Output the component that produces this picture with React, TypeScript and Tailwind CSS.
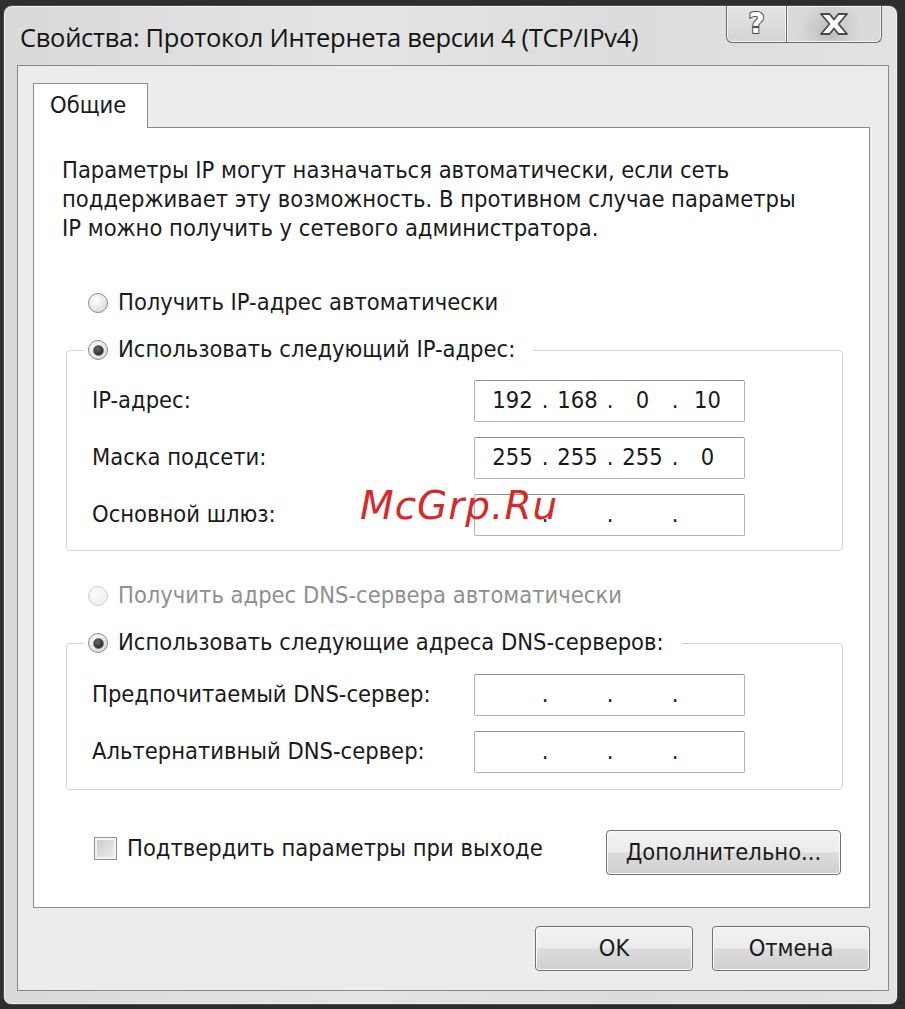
import React from "react"

const body = "font-['DejaVu_Sans_Condensed','DejaVu_Sans',sans-serif] text-[23.5px] text-[#1a1a1a]"

function Radio({ checked, disabled }: { checked?: boolean; disabled?: boolean }) {
  return (
    <span
      className={`flex size-[20px] shrink-0 items-center justify-center rounded-full border ${
        disabled
          ? "border-[#cdcdcd] bg-[radial-gradient(circle_at_40%_35%,#fbfbfb,#ececec)]"
          : "border-[#8b8b8b] bg-[radial-gradient(circle_at_40%_35%,#ffffff,#d2d2d2)]"
      }`}
    >
      {checked && (
        <span className="size-[11px] rounded-full border border-[#6a6a6a] bg-[radial-gradient(circle_at_40%_35%,#6b6b6b,#141414)]" />
      )}
    </span>
  )
}

function IpBox({ parts }: { parts: string[] }) {
  return (
    <div className="flex h-[42px] w-[271px] shrink-0 items-center rounded-[2px] border border-[#b3b3b3] border-t-[#8f8f8f] bg-white pl-[10px]">
      {parts.map((p, i) => (
        <React.Fragment key={i}>
          <span className="w-[55px] text-center">{p}</span>
          {i < 3 && <span className="w-[10px] text-center">.</span>}
        </React.Fragment>
      ))}
    </div>
  )
}

function Row({ label, parts }: { label: string; parts: string[] }) {
  return (
    <div className="flex h-[42px] items-center justify-between">
      <span>{label}</span>
      <IpBox parts={parts} />
    </div>
  )
}

function Group({ legend, children, top }: { legend: string; children: React.ReactNode; top: string }) {
  return (
    <fieldset className="ml-[4px] rounded-[4px] border border-[#d4d4d4]">
      <legend className="ml-[17px] flex h-[30px] items-center gap-[10px] pl-[4px] pr-[18px]">
        <Radio checked />
        <span>{legend}</span>
      </legend>
      <div className={`flex flex-col gap-[15px] pl-[25px] pr-[97px] ${top}`}>{children}</div>
    </fieldset>
  )
}

function Button({ children, className }: { children: React.ReactNode; className: string }) {
  return (
    <div
      className={`flex h-[45px] items-center justify-center rounded-[4px] border border-[#707070] bg-[linear-gradient(#f3f3f3_0%,#ebebeb_48%,#dcdcdc_52%,#cfcfcf_100%)] shadow-[inset_0_0_0_1px_#fbfbfb] ${className}`}
    >
      {children}
    </div>
  )
}

export default function App() {
  return (
    <div className="relative h-[1009px] w-[905px] overflow-hidden bg-[#2e2e2e] pl-[3px] pr-[7px] pt-[5px]">
      <div className="flex h-[1000px] flex-col rounded-t-[9px] rounded-b-[8px] border border-[#4a4a4a] bg-[linear-gradient(90deg,#d9d9d9,#e4e4e4_40%,#dcdcdc_70%,#e2e2e2)] shadow-[inset_0_0_0_1px_#f2f2f2]">
        <div className="flex h-[59px] shrink-0 items-start justify-between pl-[16px] pr-[15px]">
          <span className="mt-[12px] font-['Open_Sans',sans-serif] text-[25.5px] tracking-[-0.3px] text-[#141414]">
            Свойства: Протокол Интернета версии 4 (TCP/IPv4)
          </span>
          <div className="flex h-[37px]">
            <div className="flex w-[61px] items-center justify-center rounded-bl-[6px] border border-t-0 border-[#6a6a6a] bg-[linear-gradient(#e6e6e6,#d4d4d4)] shadow-[inset_0_0_0_1px_#f4f4f4]">
              <span className="font-['DejaVu_Sans',sans-serif] text-[28px] font-bold leading-none text-white [-webkit-text-stroke:2px_#4a4a4a] [paint-order:stroke_fill]">
                ?
              </span>
            </div>
            <div className="flex w-[95px] items-center justify-center rounded-br-[6px] border border-l-0 border-t-0 border-[#6a6a6a] bg-[radial-gradient(circle_at_45%_70%,#bdbdbd,#dadada_55%)] shadow-[inset_0_0_0_1px_#f4f4f4]">
              <svg width="30" height="24" viewBox="0 0 30 24">
                <path
                  d="M2 2h8.5l4.5 5.5 4.5-5.5h8.5l-8.5 10 8.5 10h-8.5l-4.5-5.5-4.5 5.5H2l8.5-10z"
                  fill="#ffffff"
                  stroke="#4a4a4a"
                  strokeWidth="1.8"
                  strokeLinejoin="round"
                />
              </svg>
            </div>
          </div>
        </div>

        <div className={`ml-[13px] mr-[8px] flex h-[926px] flex-col border border-[#8a8a8a] bg-[#ececec] pl-[15px] pr-[18px] pt-[17px] ${body}`}>
          <div className="relative z-10 -mb-px flex h-[45px] w-[115px] items-center border border-b-0 border-[#8c8c8c] bg-white pl-[16px]">
            Общие
          </div>
          <div className="flex h-[781px] flex-col border border-[#8c8c8c] bg-white pl-[28px] pr-[26px] pt-[28px]">
            <div className="leading-[29px]">
              <div>Параметры IP могут назначаться автоматически, если сеть</div>
              <div>поддерживает эту возможность. В противном случае параметры</div>
              <div>IP можно получить у сетевого администратора.</div>
            </div>

            <div className="mt-[45px] flex h-[30px] items-center gap-[10px] pl-[26px]">
              <Radio />
              <span>Получить IP-адрес автоматически</span>
            </div>

            <div className="mt-[17px]">
              <Group legend="Использовать следующий IP-адрес:" top="pt-[15px] pb-[14px]">
                <Row label="IP-адрес:" parts={["192", "168", "0", "10"]} />
                <Row label="Маска подсети:" parts={["255", "255", "255", "0"]} />
                <Row label="Основной шлюз:" parts={["", "", "", ""]} />
              </Group>
            </div>

            <div className="mt-[30px] flex h-[30px] items-center gap-[10px] pl-[26px] text-[#8f8f8f]">
              <Radio disabled />
              <span>Получить адрес DNS-сервера автоматически</span>
            </div>

            <div className="mt-[17px]">
              <Group legend="Использовать следующие адреса DNS-серверов:" top="pt-[16px] pb-[16px]">
                <Row label="Предпочитаемый DNS-сервер:" parts={["", "", "", ""]} />
                <Row label="Альтернативный DNS-сервер:" parts={["", "", "", ""]} />
              </Group>
            </div>

            <div className="mt-[40px] flex items-start justify-between pl-[32px] pr-[2px]">
              <div className="mt-[1px] flex items-center gap-[10px]">
                <span className="size-[23px] shrink-0 border border-[#8e8e8e] bg-[linear-gradient(135deg,#c9c9c9,#f0f0f0)] shadow-[inset_0_0_0_2px_#f4f4f4]" />
                <span>Подтвердить параметры при выходе</span>
              </div>
              <Button className="h-[44px] w-[235px]">Дополнительно...</Button>
            </div>
          </div>

          <div className="mt-[18px] flex justify-end gap-[19px]">
            <Button className="w-[158px]">OK</Button>
            <Button className="w-[158px]">Отмена</Button>
          </div>
        </div>
      </div>

      <span className="absolute left-[360px] top-[486px] font-['DejaVu_Sans',sans-serif] text-[39px] italic leading-none tracking-[1px] text-[#d42a2a]">
        McGrp.Ru
      </span>
    </div>
  )
}
